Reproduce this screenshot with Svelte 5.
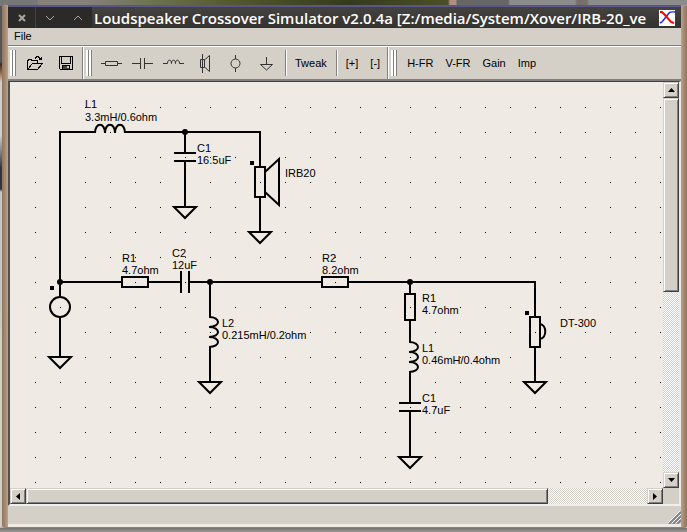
<script>
  const file = ['Open', 'Save'];
  const parts = ['Resistor', 'Capacitor', 'Inductor', 'Driver', 'Source', 'Ground'];
  const views = ['H-FR', 'V-FR', 'Gain', 'Imp'];

  const wires = [
    'M60 296V132H96', 'M125 132H260V166', 'M185 132V152', 'M185 162V207', 'M260 197V232',
    'M60 317V357', 'M60 282H122', 'M148 282H181', 'M189 282H322', 'M348 282H535V316',
    'M210 282V317', 'M210 347V382', 'M410 282V294', 'M410 320V342', 'M410 372V403',
    'M410 411V457', 'M535 347V382'
  ];
  const nodes = [[185, 132], [60, 282], [210, 282], [410, 282]];
  const grounds = [[185, 207], [260, 232], [60, 357], [210, 382], [410, 457], [535, 382]];
  const boxes = [
    [122, 277, 26, 10], [322, 277, 26, 10], [405, 294, 10, 26],
    [255, 167, 10, 30], [530, 317, 10, 30]
  ];
  const marks = [[250, 161], [50, 286], [525, 311]];
  const labels = [
    [85, 108, 'L1'], [85, 121, '3.3mH/0.6ohm'],
    [197, 152, 'C1'], [197, 164, '16.5uF'],
    [285, 177, 'IRB20'],
    [122, 262, 'R1'], [122, 274, '4.7ohm'],
    [172, 257, 'C2'], [172, 269, '12uF'],
    [322, 262, 'R2'], [322, 274, '8.2ohm'],
    [222, 327, 'L2'], [222, 339, '0.215mH/0.2ohm'],
    [422, 302, 'R1'], [422, 314, '4.7ohm'],
    [422, 352, 'L1'], [422, 364, '0.46mH/0.4ohm'],
    [422, 402, 'C1'], [422, 414, '4.7uF'],
    [560, 327, 'DT-300']
  ];
</script>

<div class="desktop">
  <div class="window">
    <header class="title">
      <div class="controls">
        <button aria-label="Close"><svg width="12" height="12"><path d="M3 3L9 9M9 3L3 9" stroke-width="2" /></svg></button>
        <button aria-label="Minimize"><svg width="12" height="12"><path d="M2 4L6 8L10 4" /></svg></button>
        <button aria-label="Maximize"><svg width="12" height="12"><path d="M2 8L6 4L10 8" /></svg></button>
      </div>
      <h1>Loudspeaker Crossover Simulator v2.0.4a [Z:/media/System/Xover/IRB-20_ve</h1>
      <svg class="logo" width="16" height="16" viewBox="0 0 16 16">
        <path fill="#fff" d="M0 0H16V16H0z" />
        <path d="M1 13L3 12L10 3Q11 1.500 16 2" stroke="#22f" stroke-width="1.500" fill="none" />
        <path d="M1 2H3L6 5L12 12L15 13" stroke="#f00" stroke-width="2" fill="none" />
      </svg>
    </header>

    <nav class="menu"><button>File</button></nav>

    <div class="toolbar">
      <div class="band">
        <i class="grip"></i>
        {#each file as name}
          <button class="tool" aria-label={name}>
            {#if name === 'Open'}
              <svg width="16" height="14" viewBox="0 0 16 14" shape-rendering="crispEdges">
                <path d="M.5 13.500V4.500H1.500V3.500H4.500V4.500H10.500V7M.5 13.500L5.500 7.500H15.500L10.500 13.500H.5M8.500 2.500V1.500H9.500V.5H11.500V1.500H12.500V2.500H13.500V3.500M11.500 3.500H14.500V.5" fill="none" stroke="#000" />
              </svg>
            {:else}
              <svg width="14" height="14" viewBox="0 0 14 14" shape-rendering="crispEdges">
                <path d="M.5 .5H13.500V13.500H1.500L.5 12.500zM2.500 .5V7.500H11.500V.5M3.500 13V9.500H10.500V13" fill="none" stroke="#000" />
                <path fill="#444" d="M4 10H10V13H4z" /><path fill="#d4d0c8" d="M8 10H10V12H8z" />
              </svg>
            {/if}
          </button>
        {/each}
      </div>
      <div class="band">
        <i class="grip"></i>
        {#each parts as name}
          <button class="tool" aria-label={name}>
            <svg width="21" height="19" viewBox="0 0 21 19" fill="none" stroke="#333">
              {#if name === 'Resistor'}
                <path d="M0 9.500H4.500M17 9.500H21" /><path d="M4.500 7.500H16.500V11.500H4.500z" />
              {:else if name === 'Capacitor'}
                <path d="M0 9.500H8.500M12.500 9.500H21M8.500 4V15M12.500 4V15" />
              {:else if name === 'Inductor'}
                <path d="M0 9.500H4.500C4.500 5 8.500 5 8.500 9.500C8.500 5 12.500 5 12.500 9.500C12.500 5 16.500 5 16.500 9.500H21" />
              {:else if name === 'Driver'}
                <path d="M8.500 0V19M6.500 5.500H10.500V13.500H6.500zM10.500 6L15.500 1.500V17.500L10.500 13" />
              {:else if name === 'Source'}
                <path d="M10.500 1V5M10.500 14V18" /><circle cx="10.500" cy="9.500" r="4.500" />
              {:else}
                <path d="M10.500 3V10M4.500 10.500H16.500L10.500 16z" />
              {/if}
            </svg>
          </button>
        {/each}
        <i class="sep"></i>
        <button class="text">Tweak</button>
        <i class="sep"></i>
        <button class="text">[+]</button>
        <button class="text">[-]</button>
      </div>
      <div class="band">
        <i class="grip"></i>
        {#each views as name}<button class="text">{name}</button>{/each}
      </div>
    </div>

    <main class="work">
      <svg class="canvas" role="img" aria-label="Crossover schematic">
        <defs>
          <pattern id="grid" x="25" y="25" width="25" height="25" patternUnits="userSpaceOnUse">
            <rect width="1" height="1" fill="#000" shape-rendering="crispEdges" />
          </pattern>
        </defs>
        <rect x="25" y="25" width="100%" height="100%" fill="url(#grid)" />
        <g transform="translate(-10 -82)" fill="none" stroke="#000" stroke-width="2">
          {#each wires as d}<path {d} />{/each}
          {#each grounds as [x, y]}<path d="M{x - 11} {y}H{x + 11}L{x} {y + 11}z" />{/each}
          {#each boxes as [x, y, w, h]}<rect {x} {y} width={w} height={h} />{/each}
          <path d="M95 133C95 122 105 122 105 133C105 122 115 122 115 133C115 122 125 122 125 133" />
          <path d="M209 317C221 317 221 327 209 327C221 327 221 337 209 337C221 337 221 347 209 347" />
          <path d="M409 342C421 342 421 352 409 352C421 352 421 362 409 362C421 362 421 372 409 372" />
          <path d="M174 153H196M174 161H196M399 403H421M399 411H421M181 271V293M189 271V293" />
          <path d="M265 172L279 159V205L265 192" />
          <path d="M540 324C547 325 547 338 540 339" />
          <circle cx="60" cy="307" r="10" />
          <g fill="#000" stroke="none">
            {#each nodes as [cx, cy]}<circle {cx} {cy} r="3" />{/each}
            {#each marks as [x, y]}<rect {x} {y} width="4" height="4" />{/each}
            {#each labels as [x, y, t]}<text {x} {y}>{t}</text>{/each}
          </g>
        </g>
      </svg>
      <div class="bar vertical">
        <button class="arrow" aria-label="Scroll up"><svg width="7" height="4"><path d="M0 4L3.500 0L7 4z" /></svg></button>
        <div class="track"><div class="thumb"></div></div>
        <button class="arrow" aria-label="Scroll down"><svg width="7" height="4"><path d="M0 0H7L3.500 4z" /></svg></button>
      </div>
      <div class="bar horizontal">
        <button class="arrow" aria-label="Scroll left"><svg width="4" height="7"><path d="M4 0V7L0 3.500z" /></svg></button>
        <div class="track"><div class="thumb"></div></div>
        <button class="arrow" aria-label="Scroll right"><svg width="4" height="7"><path d="M0 0V7L4 3.500z" /></svg></button>
      </div>
    </main>

    <footer class="status">
      <svg width="13" height="13" viewBox="0 0 13 13">
        <path d="M1 13L13 1M5 13L13 5M9 13L13 9" stroke="#808080" stroke-width="2" />
        <path d="M0 12L12 0M4 12L13 3M8 12L13 7" stroke="#fff" />
      </svg>
    </footer>
  </div>
</div>

<style>
  .desktop {
    box-sizing: border-box;
    min-height: 100vh;
    display: flex;
    padding: 5px 0 4px 2px;
    background:
      linear-gradient(#77736f, #999) bottom / 100% 4px no-repeat,
      linear-gradient(90deg, #777 0 38px, #85807a 38px 90px, #6d7350 150px, #55592f 230px, #343b1d 350px, #4c4f28 448px, #b09080 450px 456px, #666 457px 508px, #8b8b8b 510px 575px, #77706a 577px 587px, #8b8b8b 589px 100%) top / 100% 6px no-repeat,
      linear-gradient(#555 0 62px, #302a20 64px, #a97048 74px, #cfcfca 82px 135px, #343438 168px 189px, #c8c6c0 192px 310px, #d2cfc5 340px 526px, #888 100%);
    font: 11px/13px "Liberation Sans", Arial, sans-serif;
    color: #000;
  }
  .window {
    box-sizing: border-box;
    flex: 1;
    min-width: 0;
    display: flex;
    flex-direction: column;
    padding: 0 6px;
    border-bottom: 1px solid #8a827c;
    border-radius: 4px 4px 3px 3px;
    background:
      linear-gradient(90deg, #8f7662, #a5886e 3px, #bda18a 6px) left / 6px 100% no-repeat,
      linear-gradient(90deg, #bda18a, #a5886e 3px, #8f7662 6px) right / 6px 100% no-repeat,
      #d4d0c8;
  }
  button {
    margin: 0;
    padding: 0;
    border: 0;
    background: none;
    font: inherit;
    color: inherit;
    display: flex;
    align-items: center;
    justify-content: center;
  }
  .title {
    height: 23px;
    box-sizing: border-box;
    border-top: 2px solid #5a568c;
    background: linear-gradient(#45433f, #34322f);
    display: flex;
    align-items: center;
    padding-right: 6px;
  }
  .controls {
    display: flex;
    flex: none;
    align-self: stretch;
    background: #2b2a28;
    border-radius: 0 0 4px 4px;
  }
  .controls button { width: 28px; }
  .controls button:first-child { border-right: 1px solid #44423f; }
  .controls svg { fill: none; stroke: #aaa69e; stroke-width: 1; }
  .logo { flex: none; }
  h1 {
    flex: 1;
    min-width: 0;
    margin: 0;
    padding-left: 2px;
    overflow: hidden;
    white-space: nowrap;
    font: 650 15px/18px "Open Sans", "Noto Sans", sans-serif;
    color: #fff;
  }
  .menu {
    display: flex;
    height: 17px;
    padding-left: 6px;
    border-bottom: 1px solid #808080;
  }
  .toolbar {
    display: flex;
    height: 32px;
    border-top: 1px solid #fff;
    border-bottom: 2px solid #808080;
  }
  .band {
    display: flex;
    align-items: center;
    padding-right: 1px;
    border-right: 1px solid #808080;
  }
  .band + .band { border-left: 1px solid #fff; }
  .band:last-child { flex: 1; border-right: 0; }
  .grip {
    width: 6px;
    height: 26px;
    margin: 0 4px 0 2px;
    background: linear-gradient(90deg, #fff 0 2px, #808080 2px 3px, #fff 3px 5px, #808080 5px);
  }
  .band:first-child .grip { margin-right: 3px; }
  .sep {
    width: 1px;
    height: 26px;
    margin: 0 2px 0 3px;
    border-left: 1px solid #808080;
    background: #fff;
  }
  .tool { width: 31px; height: 27px; }
  .text { height: 27px; padding: 0 6px; }
  .work {
    flex: 1;
    display: grid;
    grid-template: minmax(0, 1fr) 16px / minmax(0, 1fr) 16px;
    border: 1px solid #404040;
    border-left: 2px solid #505050;
    border-right: 2px solid #ece9e4;
    border-bottom: 2px solid #eee;
  }
  .canvas {
    display: block;
    width: 100%;
    height: 100%;
    min-height: 400px;
    background: #efeae4;
  }
  .canvas text { font: 11px "Liberation Sans", Arial, sans-serif; }
  .bar { display: flex; }
  .vertical { flex-direction: column; }
  .arrow, .thumb {
    box-sizing: border-box;
    border: 1px solid;
    border-color: #d4d0c8 #404040 #404040 #d4d0c8;
    background: #d4d0c8;
    box-shadow: inset 1px 1px #fff, inset -1px -1px #808080;
  }
  .arrow { width: 16px; height: 16px; flex: none; }
  .track {
    flex: 1;
    background: repeating-conic-gradient(#fff 0 25%, #d4d0c8 0 50%) 0 0 / 2px 2px;
  }
  .vertical .thumb { height: 52%; }
  .horizontal .thumb { width: 84%; height: 100%; }
  .status {
    height: 18px;
    display: flex;
    justify-content: flex-end;
    align-items: flex-end;
    border-bottom: 3px solid #efeae4;
  }
</style>
